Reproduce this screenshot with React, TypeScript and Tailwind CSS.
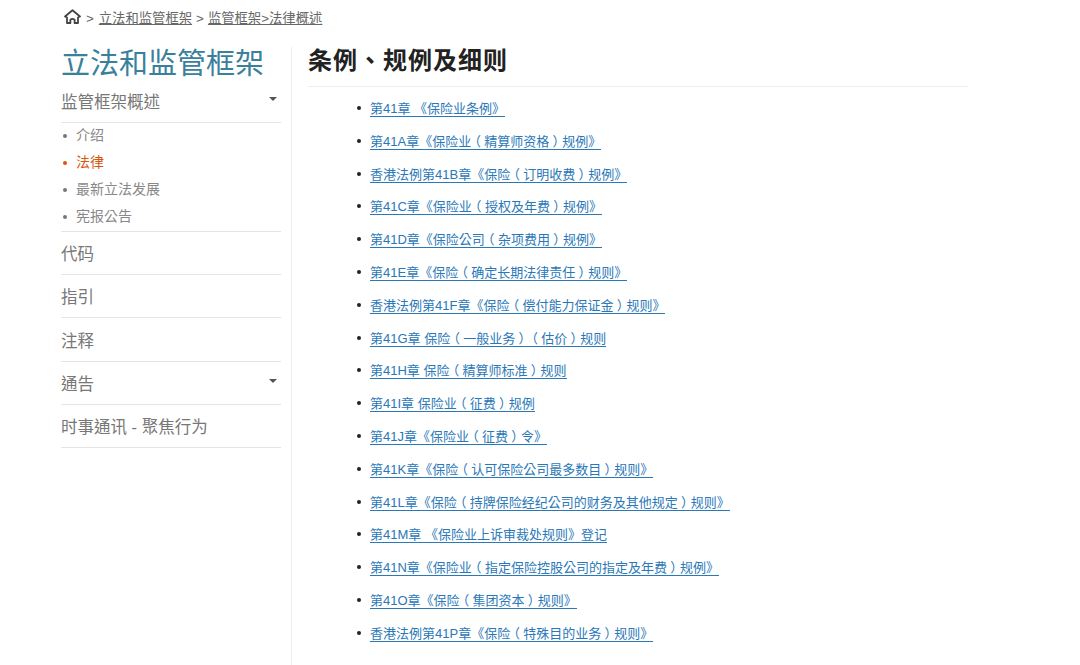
const sub = [
  { t: "介绍", active: false },
  { t: "法律", active: true },
  { t: "最新立法发展", active: false },
  { t: "宪报公告", active: false },
];

const links = [
  "第41章 《保险业条例》",
  "第41A章《保险业（精算师资格）规例》",
  "香港法例第41B章《保险（订明收费）规例》",
  "第41C章《保险业（授权及年费）规例》",
  "第41D章《保险公司（杂项费用）规例》",
  "第41E章《保险（确定长期法律责任）规则》",
  "香港法例第41F章《保险（偿付能力保证金）规则》",
  "第41G章 保险（一般业务）（估价）规则",
  "第41H章 保险（精算师标准）规则",
  "第41I章 保险业（征费）规例",
  "第41J章《保险业（征费）令》",
  "第41K章《保险（认可保险公司最多数目）规则》",
  "第41L章《保险（持牌保险经纪公司的财务及其他规定）规则》",
  "第41M章 《保险业上诉审裁处规则》登记",
  "第41N章《保险业（指定保险控股公司的指定及年费）规例》",
  "第41O章《保险（集团资本）规则》",
  "香港法例第41P章《保险（特殊目的业务）规则》",
];

function LinkText({ text }: { text: string }) {
  return (
    <>
      {text.split(/([（）])/).map((part, i) =>
        part === "（" || part === "）" ? (
          <span key={i} className="px-[3.25px] [font-feature-settings:'halt']">{part}</span>
        ) : (
          <span key={i}>{part}</span>
        )
      )}
    </>
  );
}

function Caret() {
  return <span className="mr-[4px] mt-[-7px] h-0 w-0 border-x-[4px] border-t-[4px] border-x-transparent border-t-[#555]" />;
}

function NavRow({ label, caret }: { label: string; caret?: boolean }) {
  return (
    <div className="flex h-[43.2px] items-center justify-between border-b border-[#e4e4e4] pt-[3px] text-[16.5px] text-[#777]">
      <span>{label}</span>
      {caret && <Caret />}
    </div>
  );
}

export default function App() {
  return (
    <div className="h-[665px] w-[1080px] overflow-hidden bg-white font-['Liberation_Sans','Noto_Sans_CJK_TC',sans-serif] [text-spacing-trim:space-all]">
      <div className="flex h-[37px] items-center pl-[64px] pt-[1px] text-[13.33px] text-[#666]">
        <svg width="17" height="16" viewBox="0 0 17 16" fill="none" stroke="#444" strokeWidth="1.8" strokeLinejoin="round" className="mb-[4px]">
          <path d="M1 7.5 8.5 1.2 16 7.5 14 8.5V14H10.6V10.6Q8.5 9 6.4 10.6V14H3V8.5Z" />
        </svg>
        <span className="ml-[5px]">&gt;</span>
        <a className="ml-[5px] underline">立法和监管框架</a>
        <span className="ml-[4px]">&gt;</span>
        <a className="ml-[4px] underline">监管框架&gt;法律概述</a>
      </div>
      <div className="flex pl-[61px]">
        <aside className="w-[220px]">
          <div className="pt-[2px] text-[29px] leading-[50px] text-[#3a7f9c]">立法和监管框架</div>
          <div className="flex h-[34px] items-center justify-between border-b border-[#e4e4e4] pb-[7px] text-[16.5px] text-[#777]">
            <span>监管框架概述</span>
            <Caret />
          </div>
          <ul className="-mt-[1px] border-b border-[#e4e4e4] pb-[1px]">
            {sub.map((s) => (
              <li key={s.t} className={`flex h-[27px] items-center text-[14px] ${s.active ? "text-[#d9560f]" : "text-[#888]"}`}>
                <span className={`ml-[2px] mr-[9px] h-[4px] w-[4px] rounded-full ${s.active ? "bg-[#d9560f]" : "bg-[#777]"}`} />
                {s.t}
              </li>
            ))}
          </ul>
          <NavRow label="代码" />
          <NavRow label="指引" />
          <NavRow label="注释" />
          <NavRow label="通告" caret />
          <NavRow label="时事通讯 - 聚焦行为" />
        </aside>
        <main className="ml-[10px] mt-[10px] h-[618px] w-[677px] border-l border-[#eee] pl-[16px]">
          <h1 className="h-[40px] w-[660px] border-b border-[#eee] pt-[1px] text-[24px] font-bold leading-[26px] tracking-[1px] text-[#222]">
            条例、规例及细则
          </h1>
          <ul className="pl-[62px] pt-[6px]">
            {links.map((l) => (
              <li key={l} className="relative h-[32.8px] pt-[6px] text-[13px]">
                <span className="absolute left-[-13px] top-[13px] h-[4px] w-[4px] rounded-full bg-[#222]" />
                <a className="inline-block border-b border-[#2a78b8] leading-[15px] text-[#2a78b8]">
                  <LinkText text={l} />
                </a>
              </li>
            ))}
          </ul>
        </main>
      </div>
    </div>
  );
}
